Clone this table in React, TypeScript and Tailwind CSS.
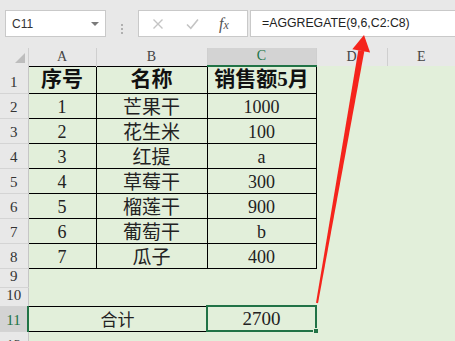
import React from "react";

const cellFont = { fontFamily: "'Liberation Serif', 'Noto Sans CJK SC', serif" };

const data = [
  ["1", "芒果干", "1000"],
  ["2", "花生米", "100"],
  ["3", "红提", "a"],
  ["4", "草莓干", "300"],
  ["5", "榴莲干", "900"],
  ["6", "葡萄干", "b"],
  ["7", "瓜子", "400"],
];

function RowHead({ n, active }: { n: number; active?: boolean }) {
  return (
    <td
      className={
        "align-bottom text-center leading-none pb-[3px] text-[15px] border-b border-b-[#d4d4d4] " +
        (active
          ? "bg-[#d3d3d3] text-[#217346] border-r-2 border-r-[#217346]"
          : "bg-[#e8e8e8] text-[#333] border-r border-r-[#c6c6c6]")
      }
    >
      {n}
    </td>
  );
}

export default function App() {
  return (
    <div className="relative w-[455px] h-[341px] overflow-hidden bg-[#e2efda]" style={cellFont}>
      {/* formula bar */}
      <div className="flex h-[48px] pt-[10px] bg-[#e8e8e8]">
        <div className="ml-[5px] flex h-[27px] w-[101px] items-center justify-between border border-[#c9c9c9] bg-white pl-[6px] pr-[6px]">
          <span className="text-[12px] text-[#333]" style={{ fontFamily: "'Liberation Sans', sans-serif" }}>
            C11
          </span>
          <span className="h-0 w-0 border-x-[4px] border-t-[4px] border-x-transparent border-t-[#7a7a7a]" />
        </div>
        <div className="flex w-[32px] flex-col items-center justify-center gap-[2px] pb-[1px]">
          <span className="h-[2px] w-[2px] bg-[#b0b0b0]" />
          <span className="h-[2px] w-[2px] bg-[#b0b0b0]" />
          <span className="h-[2px] w-[2px] bg-[#b0b0b0]" />
        </div>
        <div className="flex h-[27px] w-[110px] items-center border border-[#c9c9c9] bg-white">
          <svg className="ml-[13px]" width="12" height="12" viewBox="0 0 12 12">
            <path d="M1.5 1.5 L10.5 10.5 M10.5 1.5 L1.5 10.5" stroke="#c4c4c4" strokeWidth="1.4" fill="none" />
          </svg>
          <svg className="ml-[22px]" width="13" height="12" viewBox="0 0 13 12">
            <path d="M1 6.5 L4.8 10.2 L12 1.5" stroke="#c4c4c4" strokeWidth="1.6" fill="none" />
          </svg>
          <span className="ml-[20px] text-[16px] italic leading-none text-[#555]" style={{ fontFamily: "'Liberation Serif', serif" }}>
            f<span className="text-[12px]">x</span>
          </span>
        </div>
        <div className="ml-[2px] flex h-[27px] flex-1 items-center border border-r-0 border-[#c9c9c9] bg-white pl-[11px]">
          <span className="text-[12.3px] text-[#222]" style={{ fontFamily: "'Liberation Sans', sans-serif" }}>
            =AGGREGATE(9,6,C2:C8)
          </span>
        </div>
      </div>

      {/* sheet */}
      <table className="table-fixed border-collapse w-[455px]">
        <colgroup>
          <col className="w-[28px]" />
          <col className="w-[68px]" />
          <col className="w-[111px]" />
          <col className="w-[109px]" />
          <col className="w-[71px]" />
          <col className="w-[68px]" />
        </colgroup>
        <tbody>
          <tr className="h-[18px] text-[14px] leading-none text-[#444]">
            <td className="relative bg-[#e8e8e8] border-r border-[#cfcfcf]">
              <span className="absolute right-[3px] bottom-[3px] h-0 w-0" style={{ borderBottom: "10px solid #bdbdbd", borderLeft: "10px solid transparent" }} />
            </td>
            <td className="bg-[#e8e8e8] border-r border-[#cfcfcf] text-center align-bottom pb-[2px]">A</td>
            <td className="bg-[#e8e8e8] border-r border-[#cfcfcf] text-center align-bottom pb-[2px]">B</td>
            <td className="bg-[#d3d3d3] border-r border-[#cfcfcf] border-b-2 border-b-[#217346] text-center align-bottom pb-[2px] text-[#217346]">C</td>
            <td className="bg-[#e8e8e8] border-r border-[#cfcfcf] text-center align-bottom pb-[2px]">D</td>
            <td className="bg-[#e8e8e8] text-center align-bottom pb-[2px]">E</td>
          </tr>
          <tr className="h-[27px]">
            <RowHead n={1} />
            <td className="border border-black text-center align-middle text-[21px] font-bold leading-none text-[#111]">序号</td>
            <td className="border border-black text-center align-middle text-[21px] font-bold leading-none text-[#111]">名称</td>
            <td className="border border-black text-center align-middle text-[21px] font-bold leading-none text-[#111]">销售额5月</td>
            <td />
            <td />
          </tr>
          {data.map((r, i) => (
            <tr key={i} className="h-[25px]">
              <RowHead n={i + 2} />
              <td className="border border-black text-center align-bottom pb-[2px] text-[18px] leading-none text-[#222]">{r[0]}</td>
              <td className="border border-black text-center align-bottom pb-[1px] text-[19px] leading-none text-[#222]">{r[1]}</td>
              <td className="border border-black text-center align-bottom pb-[2px] text-[18px] leading-none text-[#222]">{r[2]}</td>
              <td />
              <td />
            </tr>
          ))}
          <tr className="h-[19px]">
            <RowHead n={9} />
            <td colSpan={5} />
          </tr>
          <tr className="h-[19px]">
            <RowHead n={10} />
            <td colSpan={5} />
          </tr>
          <tr className="h-[25px]">
            <RowHead n={11} active />
            <td colSpan={2} className="border border-black text-center align-bottom pb-[2px] text-[17px] leading-none text-[#222]">合计</td>
            <td className="relative border-2 border-[#217346] text-center align-bottom pb-[2px] text-[19px] leading-none text-[#222]">
              2700
              <span className="absolute right-[-4px] bottom-[-4px] h-[6px] w-[6px] bg-[#217346] border border-[#e2efda]" />
            </td>
            <td />
            <td />
          </tr>
          <tr className="h-[25px]">
            <RowHead n={12} />
            <td colSpan={5} />
          </tr>
        </tbody>
      </table>

      {/* red annotation arrow */}
      <svg className="pointer-events-none absolute inset-0" width="455" height="341" viewBox="0 0 455 341">
        <polygon points="358.3,50.3 364.3,51.3 318,303.2 316,302.8" fill="#f5241c" />
        <polygon points="364,35 352.3,49.2 370.1,52.4" fill="#f5241c" />
      </svg>
    </div>
  );
}
